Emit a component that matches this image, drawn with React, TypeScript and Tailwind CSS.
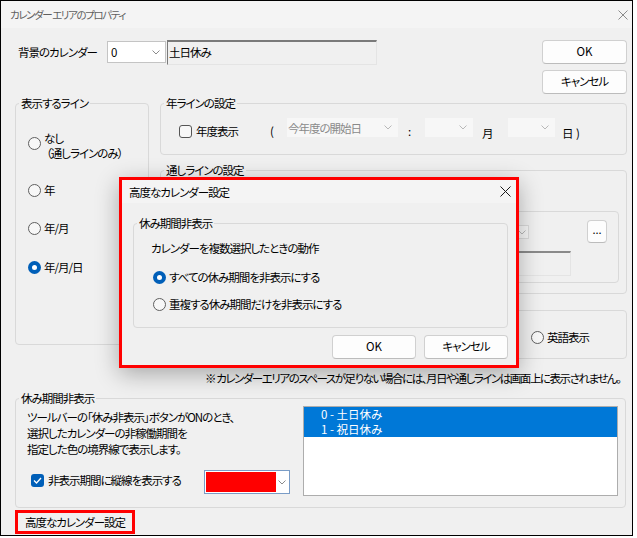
import React from 'react';

const Chevron = ({ color = '#7a7a7a' }: { color?: string }) => (
  <svg width="8" height="5" viewBox="0 0 8 5" className="shrink-0">
    <path d="M0.5 0.5 L4 4 L7.5 0.5" stroke={color} fill="none" strokeWidth="1" />
  </svg>
);

const Radio = ({ checked = false }: { checked?: boolean }) =>
  checked ? (
    <span className="flex h-[13px] w-[13px] shrink-0 items-center justify-center rounded-full bg-[#005fb8]">
      <span className="block h-[5px] w-[5px] rounded-full bg-white" />
    </span>
  ) : (
    <span className="block h-[13px] w-[13px] shrink-0 rounded-full border border-[#5f5f5f] bg-[#f7f7f7]" />
  );

const Check = ({ checked = false }: { checked?: boolean }) =>
  checked ? (
    <span className="flex h-[13px] w-[13px] shrink-0 items-center justify-center rounded-[3px] bg-[#005fb8]">
      <svg width="9" height="7" viewBox="0 0 9 7">
        <path d="M1 3.5 L3.5 6 L8 1" stroke="white" fill="none" strokeWidth="1.3" />
      </svg>
    </span>
  ) : (
    <span className="block h-[13px] w-[13px] shrink-0 rounded-[3px] border border-[#555] bg-[#f7f7f7]" />
  );

const Close = ({ color, size }: { color: string; size: number }) => (
  <svg width={size} height={size} viewBox={`0 0 ${size} ${size}`}>
    <path d={`M0.5 0.5 L${size - 0.5} ${size - 0.5} M${size - 0.5} 0.5 L0.5 ${size - 0.5}`} stroke={color} strokeWidth="1" />
  </svg>
);

const Button = ({ children, className = '' }: { children: React.ReactNode; className?: string }) => (
  <div className={`flex items-center justify-center whitespace-nowrap rounded-[4px] border border-[#d0d0d0] border-b-[#bcbcbc] bg-[#fdfdfd] ${className}`}>
    {children}
  </div>
);

const Group = ({ label, className = '', children }: { label: React.ReactNode; className?: string; children?: React.ReactNode }) => (
  <fieldset className={`rounded-[4px] border border-[#d9d9d9] ${className}`}>
    <legend className="ml-[3px] whitespace-nowrap px-[2px] leading-[16px]">{label}</legend>
    {children}
  </fieldset>
);

const Disabled = ({ w, text }: { w: string; text?: string }) => (
  <div className={`flex h-[19px] items-center bg-[#f7f7f7] pl-[1px] pr-[6px] text-[#8a8a8a] ${w}`}>
    <span className="flex-1 whitespace-nowrap leading-[16px]">{text}</span>
    <Chevron color="#b8b8b8" />
  </div>
);

export default function App() {
  return (
    <div className="relative h-[538px] w-[637px] overflow-hidden whitespace-nowrap bg-white font-['Noto_Sans_CJK_JP',sans-serif] text-[11.5px] tracking-[-1px] text-black [font-feature-settings:'palt']">
      <div className="flex h-[536px] w-[633px] flex-col border border-black bg-[#f0f0f0]">
        {/* title bar */}
        <div className="flex h-[27px] shrink-0 items-center bg-[#f4f4f4] pl-[9px] pr-[4px] text-[10.5px] tracking-[-1.4px] text-[#5f5f5f]">
          <span className="flex-1">カレンダー エリアのプロパティ</span>
          <Close color="#8a8a8a" size={10} />
        </div>

        {/* 背景のカレンダー */}
        <div className="mt-[12px] flex h-[55px] shrink-0 items-start">
          <div className="ml-[17px] mt-[4px] w-[89px] leading-[16px]">背景のカレンダー</div>
          <div className="mt-[1px] flex h-[22px] w-[59px] items-center border border-[#c4c4c4] bg-white pl-[3px] pr-[5px]">
            <span className="flex-1 leading-[16px]">0</span>
            <Chevron color="#8a8a8a" />
          </div>
          <div className="ml-[1px] flex h-[25px] w-[210px] items-center border-t-2 border-l border-r border-b border-t-[#7a7a7a] border-l-[#7a7a7a] border-r-[#e4e4e4] border-b-[#e4e4e4] bg-[#f0f0f0] pl-[1px]">
            土日休み
          </div>
          <div className="ml-auto mr-[5px] flex flex-col">
            <Button className="h-[24px] w-[85px] tracking-normal">OK</Button>
            <Button className="mt-[6px] h-[24px] w-[85px]">キャンセル</Button>
          </div>
        </div>

        {/* middle */}
        <div className="flex shrink-0 pl-[14px]">
          <Group label="表示するライン" className="h-[250px] w-[134px]">
            <div className="flex flex-col pl-[12px]">
              <div className="mt-[20px] flex items-start">
                <span className="mt-[6px] block"><Radio /></span>
                <div className="ml-[3px] leading-[15px]">
                  <div>なし</div>
                  <div className="ml-[2px]">（通しラインのみ）</div>
                </div>
              </div>
              <div className="mt-[21px] flex h-[16px] items-center gap-[3px] leading-[16px]"><Radio />年</div>
              <div className="mt-[22px] flex h-[16px] items-center gap-[3px] leading-[16px]"><Radio />年/月</div>
              <div className="mt-[23px] flex h-[16px] items-center gap-[3px] leading-[16px]"><Radio checked />年/月/日</div>
            </div>
          </Group>

          <div className="ml-[11px] flex w-[467px] flex-col">
            <Group label="年ラインの設定" className="h-[60px] w-[467px]">
              <div className="mt-[7px] flex items-start leading-[16px]">
                <div className="ml-[18px] flex w-[91px] items-start">
                  <span className="mt-[7px] block"><Check /></span>
                  <span className="ml-[4px] mt-[5px]">年度表示</span>
                </div>
                <span className="mt-[5px] w-[17px]">(</span>
                <Disabled w="w-[111px]" text="今年度の開始日" />
                <span className="mt-[5px] w-[27px] pl-[10px]">:</span>
                <Disabled w="w-[48px]" />
                <span className="mt-[7px] w-[35px] pl-[9px]">月</span>
                <Disabled w="w-[47px]" />
                <span className="ml-[7px] mt-[7px] tracking-normal">日 )</span>
              </div>
            </Group>

            <Group label="通しラインの設定" className="mt-[7px] h-[132px] w-[467px]">
              <Group label={'\u00a0'} className="ml-[11px] mt-[25px] h-[80px] w-[447px]">
                <div className="mt-[1px] flex items-start">
                  <div className="ml-[235px] mt-[5px] flex h-[14px] w-[121px] items-center justify-end border border-[#dadada] bg-[#f7f7f7] pr-[2px]">
                    <Chevron color="#b8b8b8" />
                  </div>
                  <Button className="ml-[58px] h-[23px] w-[20px] pb-[4px] text-[11px] tracking-normal">...</Button>
                </div>
                <div className="ml-[235px] mt-[8px] h-[25px] w-[163px] border-t-2 border-l border-r border-b border-t-[#8a8a8a] border-l-[#8a8a8a] border-r-[#e4e4e4] border-b-[#e4e4e4] bg-[#f0f0f0]" />
              </Group>
            </Group>

            <Group label={'\u00a0'} className="mt-[8px] h-[57px] w-[467px]">
              <div className="mt-[11px] flex h-[16px] items-center gap-[3px] pl-[370px] leading-[16px]">
                <Radio />英語表示
              </div>
            </Group>
          </div>
        </div>

        {/* note */}
        <div className="mt-[11px] shrink-0 pl-[204px] leading-[16px] tracking-[-1.45px]">
          ※ カレンダーエリアのスペースが足りない場合には、月日や通しラインは画面上に表示されません。
        </div>

        {/* 休み期間非表示 */}
        <Group label="休み期間非表示" className="ml-[14px] mt-[4px] h-[118px] w-[611px] shrink-0">
          <div className="flex">
            <div className="flex w-[287px] flex-col pl-[11px]">
              <div className="mt-[3px] leading-[16px]">
                <div>ツールバーの「休み非表示」ボタンがONのとき、</div>
                <div>選択したカレンダーの非稼働期間を</div>
                <div>指定した色の境界線で表示します。</div>
              </div>
              <div className="mt-[13px] flex items-start">
                <div className="flex w-[177px] items-start">
                  <span className="ml-[4px] mt-[4px] block"><Check checked /></span>
                  <span className="ml-[4px] mt-[2px] leading-[16px]">非表示期間に縦線を表示する</span>
                </div>
                <div className="flex h-[24px] w-[86px] items-center border border-[#7a9cc6] bg-white p-[1px]">
                  <div className="h-full w-[70px] bg-[#ff0000]" />
                  <div className="flex flex-1 items-center justify-center">
                    <Chevron color="#8a8a8a" />
                  </div>
                </div>
              </div>
            </div>
            <div className="h-[90px] w-[315px] border border-[#adadad] bg-white leading-[15px] tracking-normal text-white">
              <div className="bg-[#0078d7] pl-[17px]">0 - 土日休み</div>
              <div className="bg-[#0078d7] pl-[17px]">1 - 祝日休み</div>
            </div>
          </div>
        </Group>

        <div className="ml-[14px] mt-[2px] flex h-[24px] w-[120px] shrink-0 items-center justify-center border-[3px] border-[#ff0000] bg-[#f0f0f0] leading-[16px]">
          高度なカレンダー設定
        </div>
      </div>

      {/* overlay dialog */}
      <div className="absolute left-[119px] top-[177px] h-[191px] w-[400px] border-[3px] border-[#ff0000] shadow-[0_6px_22px_rgba(0,0,0,0.3)]">
        <div className="flex h-full flex-col bg-[#f0f0f0]">
          <div className="flex h-[23px] shrink-0 items-center bg-[#f4f4f4] pl-[7px] pr-[5px]">
            <span className="flex-1 leading-[16px]">高度なカレンダー設定</span>
            <Close color="#1a1a1a" size={11} />
          </div>
          <Group label="休み期間非表示" className="ml-[11px] mt-[12px] h-[113px] w-[375px] shrink-0">
            <div className="mt-[9px] pl-[17px] leading-[16px]">カレンダーを複数選択したときの動作</div>
            <div className="mt-[13px] flex h-[16px] items-center gap-[3px] pl-[19px] leading-[16px]">
              <Radio checked />すべての休み期間を非表示にする
            </div>
            <div className="mt-[11px] flex h-[16px] items-center gap-[3px] pl-[19px] leading-[16px]">
              <Radio />重複する休み期間だけを非表示にする
            </div>
          </Group>
          <div className="mt-[7px] flex justify-end gap-[8px] pr-[8px]">
            <Button className="h-[24px] w-[84px] border-[#6fa3d8] border-b-[#6fa3d8] tracking-normal">OK</Button>
            <Button className="h-[24px] w-[84px]">キャンセル</Button>
          </div>
        </div>
      </div>
    </div>
  );
}
